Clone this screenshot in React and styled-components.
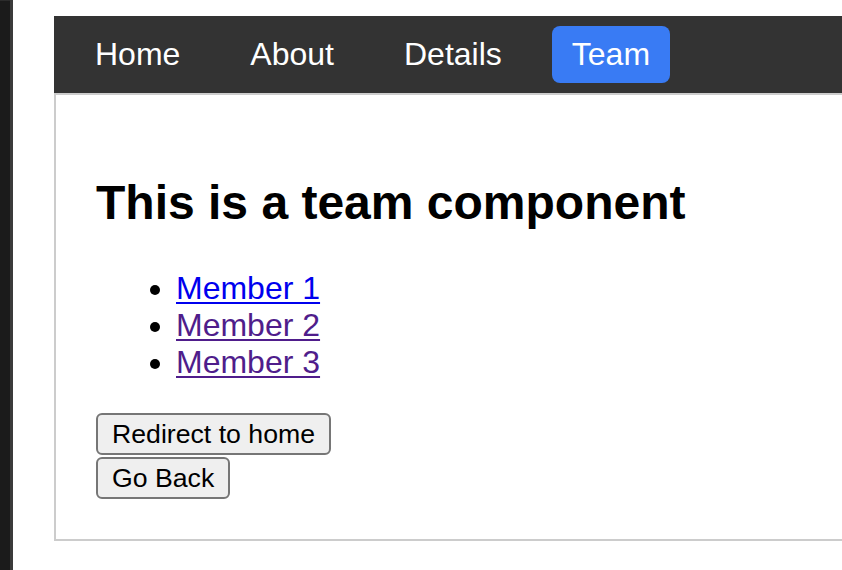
import React from "react";
import styled, { createGlobalStyle } from "styled-components";

const GlobalStyle = createGlobalStyle`
  html, body {
    margin: 0;
    padding: 0;
    overflow: hidden;
    background: #ffffff;
    font-family: "Liberation Sans", Arial, Helvetica, sans-serif;
  }
`;

const Screen = styled.div`
  display: flex;
  width: 842px;
  height: 570px;
  overflow: hidden;
`;

const Edge = styled.div`
  flex: none;
  width: 10px;
  background: #1b1b1b;
  border-right: 3px solid #3b3b3b;
  box-shadow: inset 0 10px 0 -9px #2c2c2c;
`;

const Page = styled.div`
  flex: 1;
  min-width: 0;
  padding: 16px 0 0 41px;
`;

const Frame = styled.div`
  width: 820px;
`;

const Nav = styled.nav`
  display: flex;
  align-items: center;
  gap: 30px;
  background: #333333;
  padding: 10px 21px;
`;

const NavLink = styled.a`
  display: block;
  padding: 10px 20px;
  font-size: 32px;
  line-height: 37px;
  color: #ffffff;
  text-decoration: none;
  border-radius: 8px;
  background: ${(p) => (p.$active ? "#397bf4" : "transparent")};
`;

const Content = styled.div`
  border: 2px solid #cccccc;
  border-right: none;
  padding: 0 40px 38px;
`;

const Title = styled.h1`
  margin: 0;
  padding-top: 80px;
  font-size: 48px;
  font-weight: bold;
  line-height: 55px;
  color: #000000;
`;

const MemberList = styled.ul`
  margin: 40px 0 32px;
  padding-left: 80px;
  font-size: 32px;
  line-height: 37px;
`;

const MemberLink = styled.a`
  color: ${(p) => (p.$visited ? "#4f1d8b" : "#0000ee")};
  text-decoration: underline;
  text-decoration-thickness: 2px;
  text-underline-offset: 3px;
`;

const ActionButton = styled.button`
  display: block;
  margin: 0 0 2px;
  padding: 2px 14px;
  height: 42px;
  font-family: "Liberation Sans", Arial, sans-serif;
  font-size: 26.67px;
  line-height: 34px;
  color: #000000;
  background: #efefef;
  border: 2px solid #767676;
  border-radius: 6px;
`;

const members = [
  { name: "Member 1", visited: false },
  { name: "Member 2", visited: true },
  { name: "Member 3", visited: true },
];

export default function App() {
  return (
    <>
      <GlobalStyle />
      <Screen>
        <Edge />
        <Page>
          <Frame>
            <Nav>
              <NavLink href="#">Home</NavLink>
              <NavLink href="#">About</NavLink>
              <NavLink href="#">Details</NavLink>
              <NavLink href="#" $active>
                Team
              </NavLink>
            </Nav>
            <Content>
              <Title>This is a team component</Title>
              <MemberList>
                {members.map((m) => (
                  <li key={m.name}>
                    <MemberLink href="#" $visited={m.visited}>
                      {m.name}
                    </MemberLink>
                  </li>
                ))}
              </MemberList>
              <ActionButton>Redirect to home</ActionButton>
              <ActionButton>Go Back</ActionButton>
            </Content>
          </Frame>
        </Page>
      </Screen>
    </>
  );
}
